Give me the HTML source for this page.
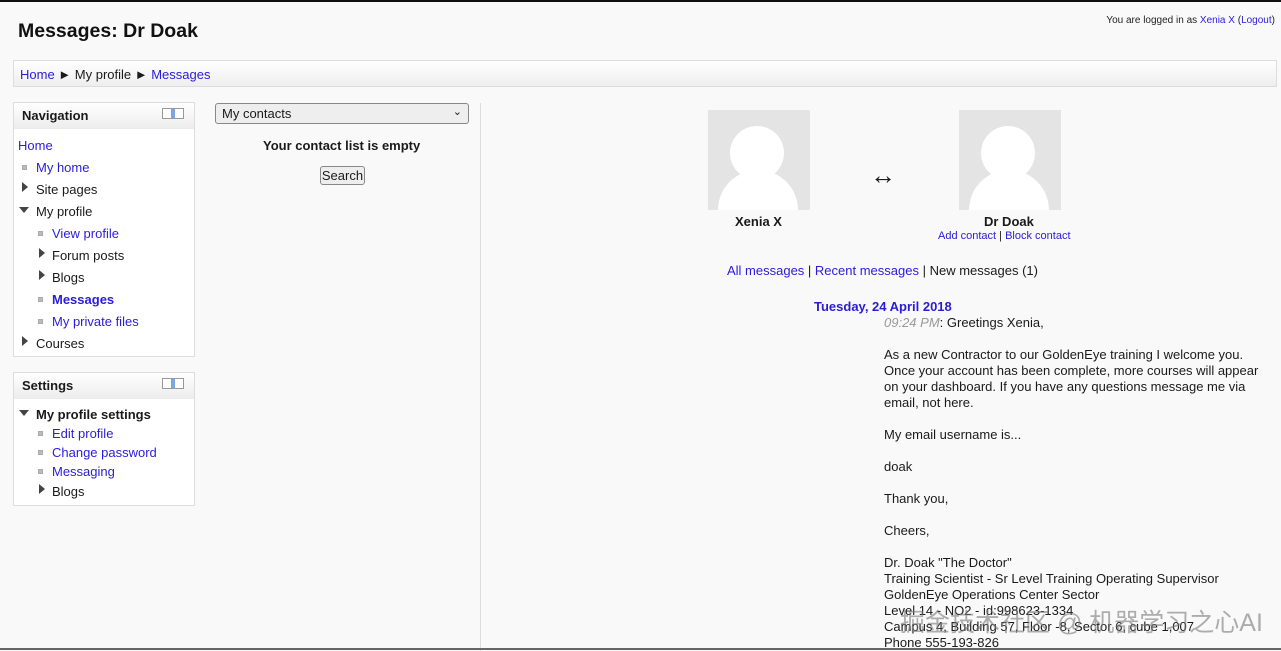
<!DOCTYPE html>
<html><head><meta charset="utf-8"><style>
*{margin:0;padding:0;box-sizing:border-box}
body{width:1281px;height:651px;overflow:hidden;background:#f9f9f9;font-family:"Liberation Sans",sans-serif;font-size:13px;color:#1a1a1a;position:relative}
a{color:#2a1cd8;text-decoration:none}
.abs{position:absolute}
h1{position:absolute;left:18px;top:20px;font-size:19.5px;font-weight:bold;color:#111}
.login{right:6px;top:15px;font-size:10px;color:#222}
.crumb{left:13px;top:60px;width:1264px;height:27px;border:1px solid #ddd;background:linear-gradient(#fff,#eee);padding:6px 0 0 6px}
.block{left:13px;width:182px;border:1px solid #ddd;background:#fff}
.bh{height:26px;background:linear-gradient(#fff,#ececec);font-weight:bold;padding:5px 8px;position:relative}
.bh i{position:absolute;right:10px;top:5px;width:22px;height:11px;border:1px solid #999;background:linear-gradient(90deg,#fff 40%,#7aa7e0 40%,#7aa7e0 60%,#fff 60%)}
.it{position:absolute;white-space:nowrap}
.sq{position:absolute;width:5px;height:5px;background:#bbb;border:1px solid #aaa}
.tri{position:absolute;width:0;height:0;border-left:6px solid #444;border-top:5px solid transparent;border-bottom:5px solid transparent}
.trd{position:absolute;width:0;height:0;border-top:6px solid #444;border-left:5px solid transparent;border-right:5px solid transparent}
.av{position:absolute;width:102px;height:100px;background:#e4e4e4;overflow:hidden}
.av:before{content:"";position:absolute;left:22px;top:16px;width:54px;height:54px;border-radius:50%;background:#fff}
.av:after{content:"";position:absolute;left:10px;top:60px;width:80px;height:80px;border-radius:50%;background:#fff}
.msg{left:884px;top:315px;line-height:16px;font-size:13px;color:#1a1a1a}
</style></head><body>
<div class="abs" style="left:0;top:0;width:1281px;height:2px;background:#111"></div>
<h1>Messages: Dr Doak</h1>
<div class="abs login">You are logged in as <a>Xenia X</a> (<a>Logout</a>)</div>
<div class="abs crumb"><a>Home</a> ► My profile ► <a>Messages</a></div>

<div class="abs block" style="top:102px;height:255px">
<div class="bh">Navigation<i></i></div>
<a class="it" style="left:4px;top:35px">Home</a>
<span class="sq" style="left:8px;top:62px"></span><a class="it" style="left:22px;top:57px">My home</a>
<span class="tri" style="left:8px;top:79px"></span><span class="it" style="left:22px;top:79px">Site pages</span>
<span class="trd" style="left:5px;top:104px"></span><span class="it" style="left:22px;top:101px">My profile</span>
<span class="sq" style="left:24px;top:128px"></span><a class="it" style="left:38px;top:123px">View profile</a>
<span class="tri" style="left:25px;top:145px"></span><span class="it" style="left:38px;top:145px">Forum posts</span>
<span class="tri" style="left:25px;top:167px"></span><span class="it" style="left:38px;top:167px">Blogs</span>
<span class="sq" style="left:24px;top:194px"></span><a class="it" style="left:38px;top:189px;font-weight:bold">Messages</a>
<span class="sq" style="left:24px;top:216px"></span><a class="it" style="left:38px;top:211px">My private files</a>
<span class="tri" style="left:8px;top:233px"></span><span class="it" style="left:22px;top:233px">Courses</span>
</div>

<div class="abs block" style="top:372px;height:134px">
<div class="bh">Settings<i></i></div>
<span class="trd" style="left:5px;top:37px"></span><b class="it" style="left:22px;top:34px">My profile settings</b>
<span class="sq" style="left:24px;top:58px"></span><a class="it" style="left:38px;top:53px">Edit profile</a>
<span class="sq" style="left:24px;top:77px"></span><a class="it" style="left:38px;top:72px">Change password</a>
<span class="sq" style="left:24px;top:96px"></span><a class="it" style="left:38px;top:91px">Messaging</a>
<span class="tri" style="left:25px;top:111px"></span><span class="it" style="left:38px;top:111px">Blogs</span>
</div>

<div class="abs" style="left:480px;top:103px;width:1px;height:548px;background:#ddd"></div>
<div class="abs" style="left:215px;top:103px;width:254px;height:21px;border:1px solid #888;border-radius:3px;background:#eee;padding:2px 6px">My contacts<span style="position:absolute;right:6px;top:1px;font-size:11px">⌄</span></div>
<b class="abs" style="left:263px;top:138px">Your contact list is empty</b>
<div class="abs" style="left:320px;top:166px;width:45px;height:19px;border:1px solid #888;border-radius:3px;background:#eee;text-align:center;padding-top:1px">Search</div>

<div class="av" style="left:708px;top:110px"></div>
<div class="av" style="left:959px;top:110px"></div>
<div class="abs" style="left:870px;top:160px;font-size:26px;font-weight:bold;line-height:30px">↔</div>
<b class="abs" style="left:735px;top:214px">Xenia X</b>
<b class="abs" style="left:984px;top:214px">Dr Doak</b>
<div class="abs" style="left:938px;top:230px;font-size:11px"><a>Add contact</a> | <a>Block contact</a></div>
<div class="abs" style="left:727px;top:263px"><a>All messages</a> | <a>Recent messages</a> | New messages (1)</div>
<b class="abs" style="left:814px;top:299px;color:#2a1cd8">Tuesday, 24 April 2018</b>
<div class="abs msg"><i style="color:#999">09:24 PM</i>: Greetings Xenia,<br><br>As a new Contractor to our GoldenEye training I welcome you.<br>Once your account has been complete, more courses will appear<br>on your dashboard. If you have any questions message me via<br>email, not here.<br><br>My email username is...<br><br>doak<br><br>Thank you,<br><br>Cheers,<br><br>Dr. Doak "The Doctor"<br>Training Scientist - Sr Level Training Operating Supervisor<br>GoldenEye Operations Center Sector<br>Level 14 - NO2 - id:998623-1334<br>Campus 4, Building 57, Floor -8, Sector 6, cube 1,007<br>Phone 555-193-826</div>
<div class="abs" style="left:900px;top:603px;font-size:25px;color:rgba(120,120,120,.6);font-family:'Liberation Sans','Noto Sans CJK SC',sans-serif;white-space:nowrap">掘金技术社区 @ 机器学习之心AI</div>
<div class="abs" style="left:0;top:648px;width:1281px;height:2px;background:#666"></div>
</body></html>
